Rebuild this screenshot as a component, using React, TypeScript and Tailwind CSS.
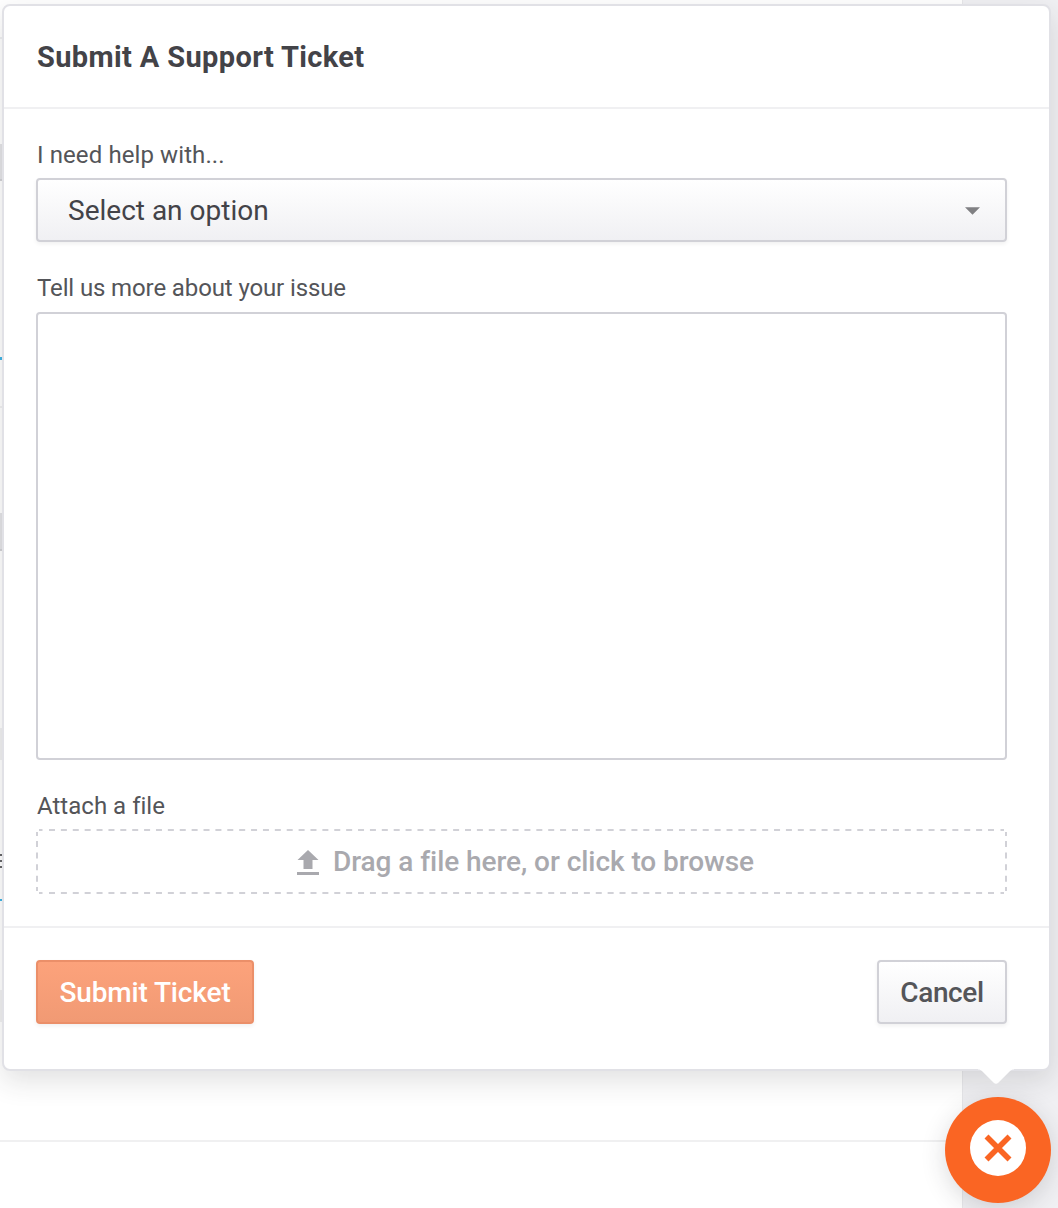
import React from "react";

function Backdrop() {
  return (
    <div className="absolute inset-0 flex" aria-hidden="true">
      <div className="relative w-[963px] shrink-0 border-r border-[#e7e7ea] bg-white">
        <div className="absolute left-0 top-[37px] h-[2px] w-[3px] bg-[#f0f0f2]" />
        <div className="absolute left-0 top-[144px] h-[37px] w-[3px] border-b-2 border-[#d2d2d6] bg-[#e4e4e7]" />
        <div className="absolute left-0 top-[357px] h-[3px] w-[3px] bg-[#3fb4e6]" />
        <div className="absolute left-0 top-[406px] h-[2px] w-[3px] bg-[#f0f0f2]" />
        <div className="absolute left-0 top-[513px] h-[38px] w-[3px] border-b-2 border-[#d2d2d6] bg-[#e4e4e7]" />
        <div className="absolute left-0 top-[728px] h-[32px] w-[3px] bg-[#f0f0f2]" />
        <div className="absolute left-0 top-[854px] h-[14px] w-[2px] border-y-2 border-[#66666a]">
          <div className="mt-[4px] h-[2px] bg-[#66666a]" />
        </div>
        <div className="absolute left-0 top-[899px] h-[2px] w-[3px] bg-[#3fb4e6]" />
        <div className="absolute left-0 top-[990px] h-[32px] w-[3px] bg-[#f0f0f2]" />
        <div className="absolute left-0 top-[1140px] h-[2px] w-full bg-[#f0f0f1]" />
      </div>
      <div className="flex-1 bg-[#f0f0f3]" />
    </div>
  );
}

function Label({ children, className }: { children: React.ReactNode; className: string }) {
  return (
    <label className={`block w-fit whitespace-nowrap text-[24px] leading-[28px] text-[#545559] ${className}`}>
      {children}
    </label>
  );
}

function DashedOutline() {
  return (
    <svg
      className="pointer-events-none absolute inset-0"
      width="971"
      height="65"
      viewBox="0 0 971 65"
      fill="none"
      stroke="#d1d1d7"
      strokeWidth="2"
    >
      <path d="M3 1h3.5M964.5 1h3.5M3 64h3.5M964.5 64h3.5" />
      <path d="M13 1h947M13 64h947" strokeDasharray="6 5.886" />
      <path d="M1 3v4M1 58v4M970 3v4M970 58v4" />
      <path d="M1 12v44M970 12v44" strokeDasharray="6 5.6" />
    </svg>
  );
}

export default function App() {
  return (
    <div className="relative h-[1208px] w-[1058px] overflow-hidden bg-white pl-[2px] pt-[4px] font-[Roboto,sans-serif]">
      <Backdrop />

      <section className="relative flex h-[1067px] w-[1049px] flex-col rounded-[8px] border-2 border-[#e1e1e6] bg-white shadow-[0_10px_28px_rgba(40,40,45,0.14)]">
        <header className="flex h-[103px] items-center border-b-2 border-[#f0f0f2] pl-[33px]">
          <h1 className="whitespace-nowrap text-[29px] font-bold leading-[34px] tracking-[0.37px] text-[#434348]">
            Submit A Support Ticket
          </h1>
        </header>

        <div className="flex h-[819px] flex-col border-b-2 border-[#f0f0f2] pl-[32px] pr-[42px] pt-[32px]">
          <Label className="ml-px tracking-[0.1px]">I need help with...</Label>
          <button className="mt-[9px] flex h-[64px] shrink-0 items-center justify-between rounded-[4px] border-2 border-[#d1d1d7] bg-linear-to-b from-white to-[#f0f0f3] pl-[30px] pr-[25px] pt-px shadow-[0_2px_4px_rgba(0,0,0,0.06)]">
            <span className="text-[28px] leading-[34px] text-[#434348]">Select an option</span>
            <svg width="15" height="8" viewBox="0 0 15 8" fill="#808083">
              <path d="M0 0.3h15L7.5 7.7z" />
            </svg>
          </button>

          <Label className="ml-px mt-[32px] tracking-[-0.12px]">Tell us more about your issue</Label>
          <textarea className="mt-[10px] block h-[448px] shrink-0 resize-none rounded-[4px] border-2 border-[#d1d1d7] bg-white p-4 text-[24px] outline-none" />

          <Label className="ml-px mt-[32px] tracking-[0.02px]">Attach a file</Label>
          <div className="relative mt-[9px] flex h-[65px] shrink-0 items-center rounded-[4px] pl-[261px] text-[#a9a9ae]">
            <DashedOutline />
            <svg className="mt-px" width="22" height="25" viewBox="0 0 22 25" fill="currentColor">
              <path d="M11 0l10.5 10H15.5v9h-9v-9H.5zM0 22h22v3H0z" />
            </svg>
            <span className="ml-[14px] whitespace-nowrap text-[28px] font-medium leading-[34px] tracking-[-0.06px]">
              Drag a file here, or click to browse
            </span>
          </div>
        </div>

        <footer className="flex justify-between pl-[32px] pr-[42px] pt-[32px]">
          <button className="flex h-[64px] w-[218px] items-center justify-center rounded-[4px] border-2 border-[#eb8f69] bg-linear-to-b from-[#fca27b] to-[#f19a74] pt-[2px] text-[28px] font-medium leading-[34px] tracking-[-0.13px] text-white shadow-[0_2px_4px_rgba(0,0,0,0.06)]">
            Submit Ticket
          </button>
          <button className="flex h-[64px] w-[130px] items-center justify-center rounded-[4px] border-2 border-[#d1d1d7] bg-linear-to-b from-white to-[#f0f0f3] pt-[2px] text-[28px] font-medium leading-[34px] tracking-[-0.4px] text-[#545559] shadow-[0_2px_4px_rgba(0,0,0,0.06)]">
            Cancel
          </button>
        </footer>

        <svg className="absolute left-[974px] top-[1062px]" width="36" height="17" viewBox="0 0 36 17">
          <path d="M0 0h36v1.5c-2 0-3 .6-4.2 1.8L20.3 14.7c-1.4 1.4-3.2 1.4-4.6 0L4.2 3.3C3 2.1 2 1.5 0 1.5z" fill="white" />
        </svg>
      </section>

      <button
        aria-label="Close"
        className="absolute left-[945px] top-[1097px] flex size-[106px] items-center justify-center rounded-full bg-[#fa6523] pb-[4px] shadow-[0_6px_24px_rgba(40,40,45,0.17)]"
      >
        <span className="flex size-[56px] items-center justify-center rounded-full bg-white">
          <svg width="28" height="28" viewBox="0 0 28 28" stroke="#fa6523" strokeWidth="5.6">
            <path d="M2.5 2.5l23 23M25.5 2.5L2.5 25.5" />
          </svg>
        </span>
      </button>
    </div>
  );
}
